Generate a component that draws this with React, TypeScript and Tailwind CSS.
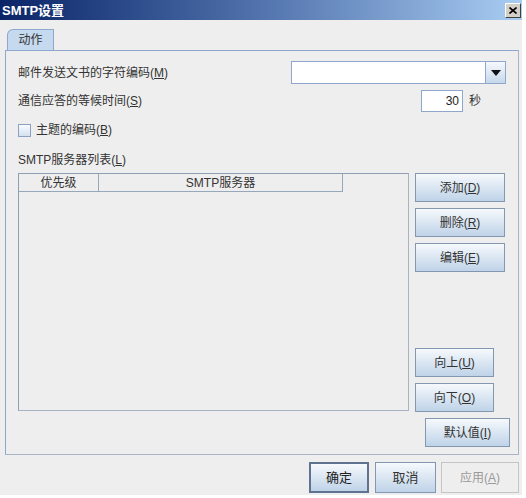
import type { ReactNode } from "react";

const font = { fontFamily: '"Liberation Sans", "Noto Sans CJK SC", sans-serif' };

const Mn = ({ k }: { k: string }) => (
  <span>
    (<u className="underline-offset-1">{k}</u>)
  </span>
);

interface BtnProps {
  children: ReactNode;
  className?: string;
  disabled?: boolean;
  focused?: boolean;
}

const Btn = ({ children, className = "", disabled, focused }: BtnProps) => {
  const skin = disabled
    ? "border-[#c4c4c4] bg-[#eeeeee] text-[#9a9a9a]"
    : focused
      ? "border-2 border-[#5f7391] bg-linear-to-b from-[#f6f9fc] to-[#bfd3e8] text-[#222]"
      : "border-[#8497b1] bg-linear-to-b from-[#f6f9fc] to-[#bfd3e8] text-[#333]";
  return (
    <div className={`flex shrink-0 items-center justify-center border text-[12px] ${skin} ${className}`}>
      {children}
    </div>
  );
};

const App = () => {
  return (
    <div className="h-[498px] w-[526px] bg-white" style={font}>
      <div className="flex h-[495px] w-[522px] flex-col bg-[#eeeeee]">
        {/* title bar */}
        <div className="flex h-[20px] items-center justify-between bg-linear-to-r from-[#0b2468] via-[#5273ad] to-[#a9cdf2] pl-[2px] pr-[1px]">
          <span className="text-[13px] font-bold leading-none text-white">SMTP设置</span>
          <div className="flex h-[15px] w-[16px] items-center justify-center border border-t-white border-l-white border-r-[#404040] border-b-[#404040] bg-[#d4d0c8]">
            <svg width="8" height="7" viewBox="0 0 8 7">
              <path d="M0.5 0.5 L7.5 6.5 M7.5 0.5 L0.5 6.5" stroke="#000" strokeWidth="1.6" />
            </svg>
          </div>
        </div>

        <div className="flex flex-col pl-[5px] pt-[9px]">
          {/* tab */}
          <div className="ml-[2px] flex h-[21px] w-[47px] items-center justify-center rounded-tl-[6px] border border-b-0 border-[#8fa7cc] bg-[#c6daef] text-[12px] text-[#333]">
            动作
          </div>

          {/* panel */}
          <div className="flex h-[405px] w-[514px] flex-col border border-t-[#8fa7cc] border-l-[#8fa7cc] border-r-[#a9b5c5] border-b-[#a9b5c5] pl-[12px] pr-[12px] text-[12px] text-[#333]">
            <div className="mt-[10px] flex h-[23px] items-center justify-between">
              <span>
                邮件发送文书的字符编码<Mn k="M" />
              </span>
              <div className="flex h-[23px] w-[215px] border border-[#8fa7cc] bg-white">
                <div className="flex-1" />
                <div className="flex w-[20px] items-center justify-center border-l border-[#8fa7cc] bg-linear-to-b from-[#f6f9fc] to-[#c6d8ea]">
                  <svg width="10" height="6" viewBox="0 0 10 6">
                    <path d="M0 0 H10 L5 6 Z" fill="#111" />
                  </svg>
                </div>
              </div>
            </div>

            <div className="mt-[6px] flex h-[22px] items-center justify-between">
              <span>
                通信应答的等候时间<Mn k="S" />
              </span>
              <div className="mr-[25px] flex items-center">
                <div className="flex h-[22px] w-[42px] items-center justify-end border border-[#8fa7cc] bg-white pr-[3px] text-[12px] text-[#222]">
                  30
                </div>
                <span className="ml-[6px]">秒</span>
              </div>
            </div>

            <div className="mt-[9px] flex h-[18px] items-center">
              <div className="h-[13px] w-[13px] border border-[#8ca0bf] bg-linear-to-b from-[#f8fbfe] to-[#d3e1ef]" />
              <span className="ml-[5px]">
                主题的编码<Mn k="B" />
              </span>
            </div>

            <div className="mt-[13px] flex h-[16px] items-center">
              <span>
                SMTP服务器列表<Mn k="L" />
              </span>
            </div>

            <div className="mt-[5px] flex">
              {/* table */}
              <div className="h-[238px] w-[391px] shrink-0 border border-t-[#8e9fb5] border-l-[#8e9fb5] border-r-[#a8b4c4] border-b-[#a8b4c4]">
                <div className="flex h-[18px] w-[324px] border-b border-r border-[#97a7bc]">
                  <div className="flex w-[80px] items-center justify-center border-r border-[#97a7bc]">优先级</div>
                  <div className="flex flex-1 items-center justify-center">SMTP服务器</div>
                </div>
              </div>

              {/* side buttons */}
              <div className="ml-[6px] flex shrink-0 flex-col">
                <Btn className="h-[29px] w-[90px]">
                  添加<Mn k="D" />
                </Btn>
                <Btn className="mt-[6px] h-[29px] w-[90px]">
                  删除<Mn k="R" />
                </Btn>
                <Btn className="mt-[6px] h-[29px] w-[90px]">
                  编辑<Mn k="E" />
                </Btn>
                <Btn className="mt-[76px] h-[29px] w-[79px]">
                  向上<Mn k="U" />
                </Btn>
                <Btn className="mt-[6px] h-[29px] w-[79px]">
                  向下<Mn k="O" />
                </Btn>
                <Btn className="ml-[10px] mt-[6px] h-[29px] w-[85px]">
                  默认值<Mn k="I" />
                </Btn>
              </div>
            </div>
          </div>

          {/* footer */}
          <div className="mt-[7px] flex justify-end pr-[3px]">
            <Btn focused className="h-[31px] w-[60px] text-[13px]">
              确定
            </Btn>
            <Btn className="ml-[6px] h-[31px] w-[61px] text-[13px]">取消</Btn>
            <Btn disabled className="ml-[5px] h-[31px] w-[78px]">
              应用<Mn k="A" />
            </Btn>
          </div>
        </div>
      </div>
    </div>
  );
};

export default App;
